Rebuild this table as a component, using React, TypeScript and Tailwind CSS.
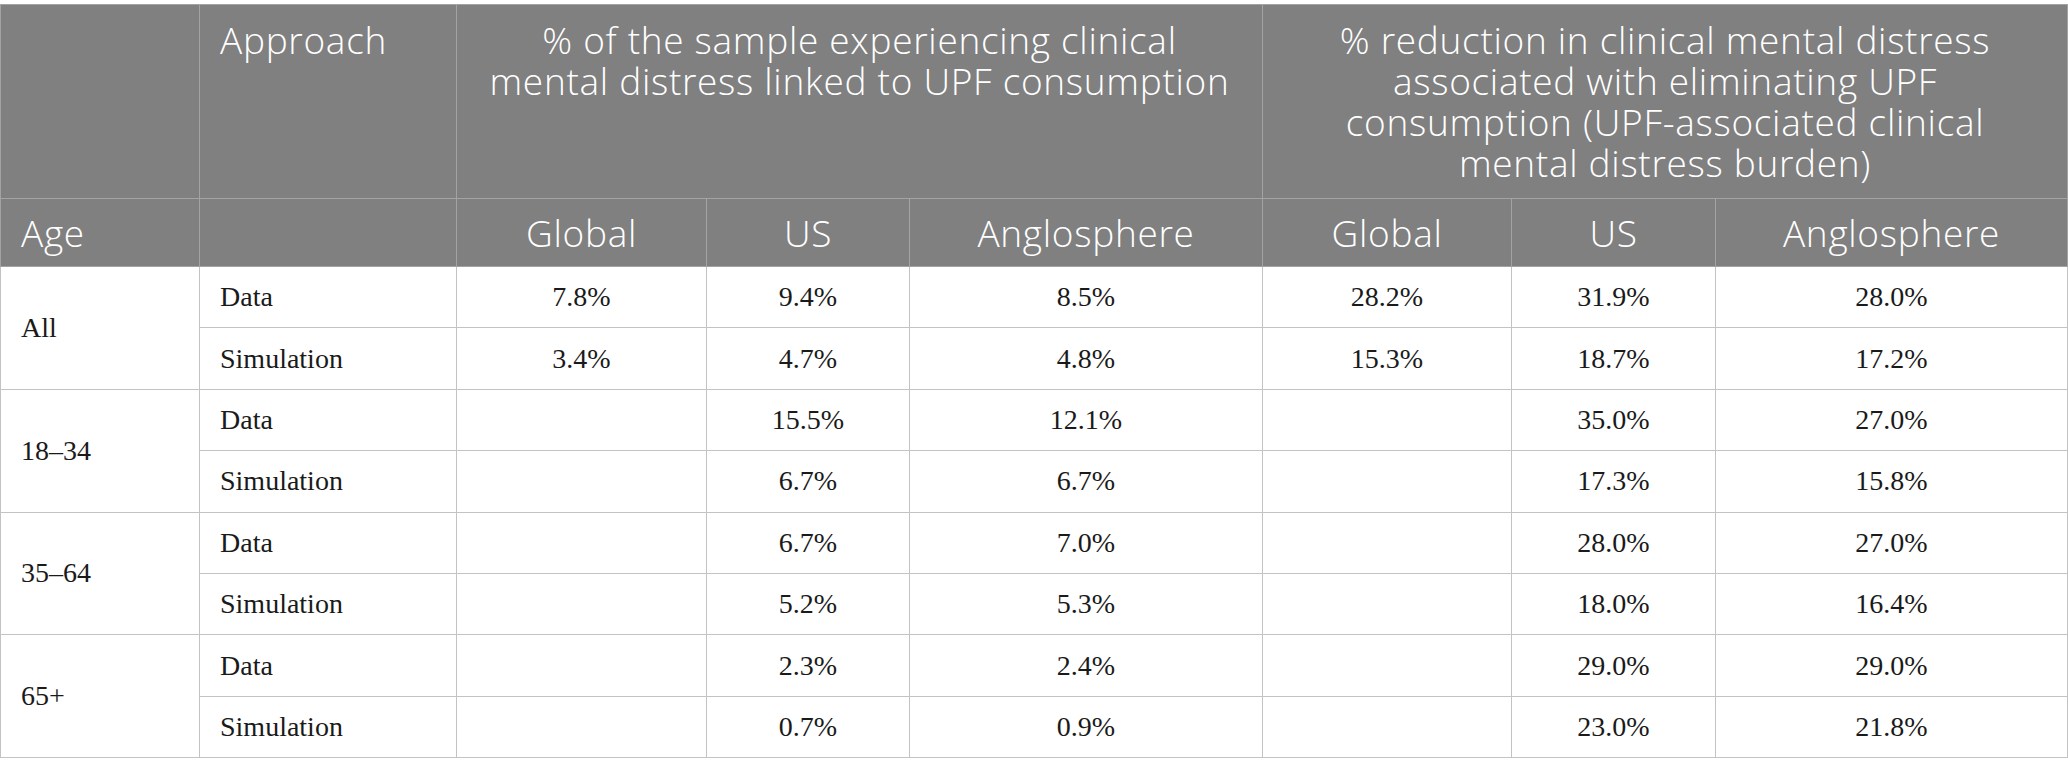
const head = "font-['Open_Sans',sans-serif] font-light text-white text-[37px] leading-[41px] tracking-[0.7px]";
const body = "font-['Liberation_Serif','Times_New_Roman',serif] text-[28px] text-[#1a1a1a]";

const groups = [
  {
    age: 'All',
    rows: [
      ['Data', '7.8%', '9.4%', '8.5%', '28.2%', '31.9%', '28.0%'],
      ['Simulation', '3.4%', '4.7%', '4.8%', '15.3%', '18.7%', '17.2%'],
    ],
  },
  {
    age: '18–34',
    rows: [
      ['Data', '', '15.5%', '12.1%', '', '35.0%', '27.0%'],
      ['Simulation', '', '6.7%', '6.7%', '', '17.3%', '15.8%'],
    ],
  },
  {
    age: '35–64',
    rows: [
      ['Data', '', '6.7%', '7.0%', '', '28.0%', '27.0%'],
      ['Simulation', '', '5.2%', '5.3%', '', '18.0%', '16.4%'],
    ],
  },
  {
    age: '65+',
    rows: [
      ['Data', '', '2.3%', '2.4%', '', '29.0%', '29.0%'],
      ['Simulation', '', '0.7%', '0.9%', '', '23.0%', '21.8%'],
    ],
  },
];

const hCell = 'border border-[#a3a3a3] bg-[#7f807f] align-top';
const bCell = 'border border-[#c3c3c3] align-middle';

export default function App() {
  return (
    <div className="min-h-[776px] w-[2068px] bg-white pt-[4px]">
      <table className="w-[2067px] table-fixed border-collapse">
        <colgroup>
          <col className="w-[199px]" />
          <col className="w-[257px]" />
          <col className="w-[250px]" />
          <col className="w-[203px]" />
          <col className="w-[353px]" />
          <col className="w-[249px]" />
          <col className="w-[204px]" />
          <col className="w-[352px]" />
        </colgroup>
        <thead>
          <tr className="h-[194px]">
            <th className={hCell}></th>
            <th className={`${hCell} pl-[20px] pt-[14px] text-left`}>
              <span className={head}>Approach</span>
            </th>
            <th colSpan={3} className={`${hCell} px-[10px] pt-[14px] text-center`}>
              <div className={head}>
                % of the sample experiencing clinical
                <br />
                mental distress linked to UPF consumption
              </div>
            </th>
            <th colSpan={3} className={`${hCell} px-[10px] pt-[14px] text-center`}>
              <div className={head}>
                % reduction in clinical mental distress
                <br />
                associated with eliminating UPF
                <br />
                consumption (UPF-associated clinical
                <br />
                mental distress burden)
              </div>
            </th>
          </tr>
          <tr className="h-[68px]">
            <th className={`${hCell} !align-middle pl-[20px] text-left`}>
              <span className={head}>Age</span>
            </th>
            <th className={hCell}></th>
            {['Global', 'US', 'Anglosphere', 'Global', 'US', 'Anglosphere'].map((t, i) => (
              <th key={i} className={`${hCell} !align-middle text-center`}>
                <span className={head}>{t}</span>
              </th>
            ))}
          </tr>
        </thead>
        <tbody>
          {groups.map((g) =>
            g.rows.map((r, ri) => (
              <tr key={g.age + ri} className="h-[61.4px]">
                {ri === 0 && (
                  <td rowSpan={2} className={`${bCell} pl-[20px] ${body}`}>
                    {g.age}
                  </td>
                )}
                <td className={`${bCell} pl-[20px] ${body}`}>{r[0]}</td>
                {r.slice(1).map((v, vi) => (
                  <td key={vi} className={`${bCell} text-center ${body}`}>
                    {v}
                  </td>
                ))}
              </tr>
            ))
          )}
        </tbody>
      </table>
    </div>
  );
}
